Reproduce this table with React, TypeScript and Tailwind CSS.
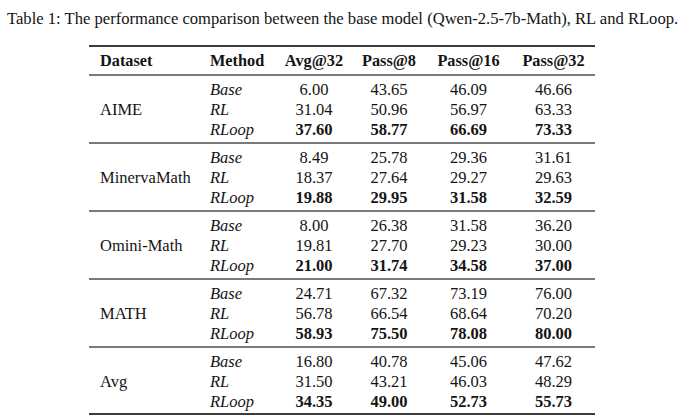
import React from "react";

type Row = { m: string; v: string[]; bold?: boolean };
type Group = { name: string; rows: Row[] };

const groups: Group[] = [
  {
    name: "AIME",
    rows: [
      { m: "Base", v: ["6.00", "43.65", "46.09", "46.66"] },
      { m: "RL", v: ["31.04", "50.96", "56.97", "63.33"] },
      { m: "RLoop", v: ["37.60", "58.77", "66.69", "73.33"], bold: true },
    ],
  },
  {
    name: "MinervaMath",
    rows: [
      { m: "Base", v: ["8.49", "25.78", "29.36", "31.61"] },
      { m: "RL", v: ["18.37", "27.64", "29.27", "29.63"] },
      { m: "RLoop", v: ["19.88", "29.95", "31.58", "32.59"], bold: true },
    ],
  },
  {
    name: "Omini-Math",
    rows: [
      { m: "Base", v: ["8.00", "26.38", "31.58", "36.20"] },
      { m: "RL", v: ["19.81", "27.70", "29.23", "30.00"] },
      { m: "RLoop", v: ["21.00", "31.74", "34.58", "37.00"], bold: true },
    ],
  },
  {
    name: "MATH",
    rows: [
      { m: "Base", v: ["24.71", "67.32", "73.19", "76.00"] },
      { m: "RL", v: ["56.78", "66.54", "68.64", "70.20"] },
      { m: "RLoop", v: ["58.93", "75.50", "78.08", "80.00"], bold: true },
    ],
  },
  {
    name: "Avg",
    rows: [
      { m: "Base", v: ["16.80", "40.78", "45.06", "47.62"] },
      { m: "RL", v: ["31.50", "43.21", "46.03", "48.29"] },
      { m: "RLoop", v: ["34.35", "49.00", "52.73", "55.73"], bold: true },
    ],
  },
];

const cols = "grid grid-cols-[111px_75px_78px_72px_87px_83px]";

export default function App() {
  return (
    <div
      className="w-[680px] h-[416px] overflow-hidden bg-white text-[#141414]"
      style={{ fontFamily: '"Liberation Serif", "Times New Roman", serif' }}
    >
      <div className="pt-[9px] pl-[7px] text-[16.6px] leading-[20px] whitespace-nowrap">
        Table 1: The performance comparison between the base model (Qwen-2.5-7b-Math), RL and RLoop.
      </div>
      <div className="ml-[89px] mt-[16px] w-[506px]">
        <div className="h-[2px] bg-[#3c3c3c]" />
        <div className={`${cols} pt-[4px] pb-[3px] text-[16.3px] leading-[20px] font-bold`}>
          <div className="pl-[11px]">Dataset</div>
          <div className="pl-[10px]">Method</div>
          <div className="text-center">Avg@32</div>
          <div className="text-center">Pass@8</div>
          <div className="text-center">Pass@16</div>
          <div className="text-center">Pass@32</div>
        </div>
        {groups.map((g, gi) => (
          <div key={g.name}>
            <div className="h-[1.5px] bg-[#7a7a7a]" />
            <div
              className={`${cols} grid-rows-[20px_20px_20px] pt-[4px] ${
                gi === groups.length - 1 ? "pb-[1px]" : "pb-[2.5px]"
              } text-[16.5px] leading-[20px]`}
            >
              <div className="row-span-3 flex items-center pl-[11px]">{g.name}</div>
              {g.rows.map((r) => (
                <React.Fragment key={r.m}>
                  <div className="col-start-2 pl-[10px] italic">{r.m}</div>
                  {r.v.map((v, i) => (
                    <div key={i} className={`text-center ${r.bold ? "font-bold" : ""}`}>
                      {v}
                    </div>
                  ))}
                </React.Fragment>
              ))}
            </div>
          </div>
        ))}
        <div className="h-[2px] bg-[#3c3c3c]" />
      </div>
    </div>
  );
}
